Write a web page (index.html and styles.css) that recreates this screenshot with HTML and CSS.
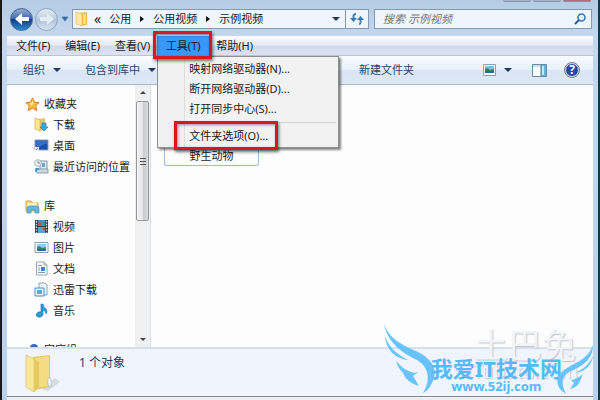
FILE: index.html
```html
<!DOCTYPE html>
<html lang="zh-CN">
<head>
    <meta charset="UTF-8">
    <meta name="viewport" content="width=device-width, initial-scale=1.0">
    <title>示例视频</title>
    <link rel="stylesheet" href="styles.css">
</head>
<body>
    <div class="window">
        <div class="caption"><i></i><i></i><i class="close"></i></div>
        <header class="nav">
            <button class="round back" aria-label="后退">
                <svg width="16" height="14" viewBox="0 0 16 14"><path d="M1 7L8 1V5H15V9H8V13Z" fill="#fff"/></svg>
            </button>
            <button class="round forward" aria-label="前进">
                <svg width="16" height="14" viewBox="0 0 16 14"><path d="M15 7L8 1V5H1V9H8V13Z" fill="#e6edf5"/></svg>
            </button>
            <button class="recent" aria-label="最近">
                <svg width="8" height="6" viewBox="0 0 8 6"><path d="M1 1H7L4 5Z" fill="#2c659c" stroke="#4d82b5"/></svg>
            </button>
            <div class="address">
                <svg width="14" height="16" viewBox="0 0 14 16"><path d="M3 2L12 1V14L5 15Z" fill="#e5bf51"/><path d="M1 1L7 3V15L1 13Z" fill="#fbe99c" stroke="#dcb958" stroke-width=".6"/><path d="M8 3H11V13H8Z" fill="#f7dc7d"/></svg>
                <span class="chev">«</span>
                <a href="#">公用</a><b class="right"></b>
                <a href="#">公用视频</a><b class="right"></b>
                <a href="#">示例视频</a>
                <button class="drop" aria-label="历史"><b class="down"></b></button>
                <button class="refresh" aria-label="刷新">
                    <svg width="14" height="14" viewBox="0 0 14 14"><path d="M6 2Q3 2 3.500 6M9 12Q11 12 10.500 8" fill="none" stroke="#3684c4" stroke-width="2"/><path d="M0 6H7L3.500 10ZM7 8H14L10.500 4Z" fill="#2b78bd"/></svg>
                </button>
            </div>
            <div class="search">
                <input type="text" placeholder="搜索 示例视频" aria-label="搜索">
                <svg width="12" height="12" viewBox="0 0 12 12"><circle cx="7.5" cy="4.5" r="3.5" fill="#e9f5ff" stroke="#3777b7" stroke-width="1.6"/><path d="M5 7L1 11" stroke="#2d5e99" stroke-width="2"/></svg>
            </div>
        </header>
        <nav class="menubar">
            <button>文件(F)</button>
            <button>编辑(E)</button>
            <button>查看(V)</button>
            <div class="tools">
                <button class="active">工具(T)</button>
                <div class="menu">
                    <button>映射网络驱动器(N)...</button>
                    <button>断开网络驱动器(D)...</button>
                    <button>打开同步中心(S)...</button>
                    <hr>
                    <button class="options">文件夹选项(O)...</button>
                </div>
            </div>
            <button>帮助(H)</button>
        </nav>
        <div class="toolbar">
            <button>组织<b class="down"></b></button>
            <button>包含到库中<b class="down"></b></button>
            <button class="new">新建文件夹</button>
            <button class="view" aria-label="更改视图">
                <svg width="13" height="12" viewBox="0 0 13 12"><path d="M.5.5H12.5V11.5H.5Z" fill="#fff" stroke="#8ba0b5"/><path d="M2 2H11V6H2Z" fill="#79bdea"/><path d="M2 5Q5 3 7 6L11 5V9H2Z" fill="#32805d"/><path d="M2 7H11V9H2Z" fill="#2c649d"/></svg>
                <b class="down"></b>
            </button>
            <button aria-label="预览窗格">
                <svg width="15" height="13" viewBox="0 0 15 13"><path d="M.5.5H14.5V12.5H.5Z" fill="#fff" stroke="#6689a5"/><path d="M1 2H9" stroke="#a9bccc"/><path d="M9 1H14V12H9Z" fill="#62b5d5"/><path d="M11 2V11" stroke="#bdebf5" stroke-width="2"/><path d="M9 1V12" stroke="#537e9d"/></svg>
            </button>
            <button class="help" aria-label="帮助">?</button>
        </div>
        <main class="content">
            <aside class="sidebar">
                <div class="tree">
                    <ul>
                        <li class="head"><svg width="15" height="15" viewBox="0 0 15 15"><path d="M7.5 1L9.5 5.2L14 5.6L10.7 8.8L11.7 13.5L7.5 11.1L3.3 13.5L4.3 8.8L1 5.6L5.5 5.2Z" fill="#fdbc3c" stroke="#db7819"/><path d="M7.5 3L8.7 6.5L6 8.5L4 6.5L6.5 6Z" fill="#ffe99b"/></svg>收藏夹</li>
                        <li><svg width="15" height="15" viewBox="0 0 15 15"><path d="M4 2L11 1V13L5 14Z" fill="#e8c566"/><path d="M1 1L6 3V14L1 12Z" fill="#fae793" stroke="#cfae51" stroke-width=".7"/><path d="M8 6H12V10H14L10 14L6 10H8Z" fill="#37a7e6" stroke="#1b74b5" stroke-width=".6"/></svg>下载</li>
                        <li><svg width="15" height="15" viewBox="0 0 15 15"><path d="M1 2H14V12H1Z" fill="#1d4ea8" stroke="#89a2bd"/><path d="M2 3H13V6Q7 6 5 11H2Z" fill="#376fc8"/><path d="M1 9H5V13H1Z" fill="#e7f4fd"/><path d="M2 12L4 10" stroke="#278bd4"/></svg>桌面</li>
                        <li><svg width="15" height="15" viewBox="0 0 15 15"><path d="M6 2H13V11H6Z" fill="#dce7ef" stroke="#8498a9"/><path d="M8 4H11V8H8Z" fill="#6ba8cc"/><path d="M2 10H14V14H3Z" fill="#cbd8e1" stroke="#8d9fae"/><circle cx="4" cy="4" r="3.3" fill="#f4f7f9" stroke="#a3b1bc"/><path d="M4 2V4H6" fill="none" stroke="#647e90"/><path d="M2 13V10H5" fill="none" stroke="#268bcb" stroke-width="1.4"/></svg>最近访问的位置</li>
                    </ul>
                    <ul>
                        <li class="head"><svg width="15" height="15" viewBox="0 0 15 15"><path d="M1 2H6L7 4H13V12H1Z" fill="#f4d97a" stroke="#cbaa4a"/><path d="M2 4H12V7H2Z" fill="#fff4b5"/><path d="M2 14V10Q2 7 5 7H11Q14 7 14 10V14H10V11H6V14Z" fill="#62b8dd" stroke="#3c8db7" stroke-width=".7"/></svg>库</li>
                        <li><svg width="15" height="15" viewBox="0 0 15 15"><path d="M1 1H14V14H1Z" fill="#31424e"/><path d="M4 1H11V7H4Z" fill="#3f91c8"/><path d="M4 8H11V14H4Z" fill="#51a7d5"/><path d="M4 4L7 3L8 7H4ZM8 9H11V12Z" fill="#ba5840"/><path d="M2.5 2V14M12.5 2V14" stroke="#d8e3e7" stroke-width="1.3" stroke-dasharray="1.4 1.4"/></svg>视频</li>
                        <li><svg width="15" height="15" viewBox="0 0 15 15"><path d="M1 2.5H14V12.5H1Z" fill="#fff" stroke="#8b9eab"/><path d="M3 4H12V11H3Z" fill="#8fcdec"/><path d="M3 7Q6 5 8 8L12 7V11H3Z" fill="#328577"/><path d="M3 9H12V11H3Z" fill="#236d9a"/></svg>图片</li>
                        <li><svg width="15" height="15" viewBox="0 0 15 15"><path d="M2.5 1H10L13 4V14H2.5Z" fill="#fafdff" stroke="#95a6b2"/><path d="M10 1V4H13" fill="none" stroke="#95a6b2"/><path d="M4 4.5H8M4 7H6M4 9H6M4 11.5H11" stroke="#7b9db6"/><path d="M7 6H11V10H7Z" fill="#3f83c6"/></svg>文档</li>
                        <li><svg width="15" height="15" viewBox="0 0 15 15"><path d="M5 1H11L13 3V13H5Z" fill="#eef7fd" stroke="#8ca4b6"/><path d="M1 6H10V14H1Z" fill="#e7f4ff" stroke="#4b8bc0"/><path d="M3 8H8V12H3Z" fill="#59a9e1"/></svg>迅雷下载</li>
                        <li><svg width="15" height="15" viewBox="0 0 15 15"><path d="M7 1H9Q9 4 12 6Q14 8 12 11Q12 8 9 7V12Q7 15 4 14Q1 13 3 10Q5 8 7 9Z" fill="#249bdd" stroke="#1d75b5" stroke-width=".6"/></svg>音乐</li>
                    </ul>
                    <ul>
                        <li class="head"><svg width="15" height="15" viewBox="0 0 15 15"><circle cx="9" cy="5" r="4" fill="#3469c5"/><circle cx="4" cy="11" r="3" fill="#45a2d5"/></svg>家庭组</li>
                    </ul>
                </div>
                <div class="scroll">
                    <b class="up"></b>
                    <div class="thumb"><i></i><i></i><i></i></div>
                    <b class="down"></b>
                </div>
            </aside>
            <section class="files">
                <div class="file">野生动物</div>
            </section>
        </main>
        <footer class="details">
            <svg width="38" height="40" viewBox="0 0 38 40"><path d="M18 36L31 25L36 29L24 38Z" fill="#d6dbe3"/><path d="M9 4L26 2V34L10 37Z" fill="#e7c55f"/><path d="M11 5L25 3V33L11 35Z" fill="#f4dc83"/><path d="M2 2L10 6V39L2 34Z" fill="#fae899" stroke="#d9bd67" stroke-width=".7"/><path d="M10 6L15 9V35L10 39Z" fill="#e8c960"/><path d="M24 25H27V33H24Z" fill="#f8fbff" stroke="#a9b7c5" stroke-width=".6"/></svg>
            <span>1 个对象</span>
        </footer>
        <div class="bottom"></div>
    </div>
    <div class="stamp"><strong>土巴兔</strong><span>Tubatu.com</span></div>
    <div class="brand">
        <svg width="54" height="72" viewBox="0 0 54 72"><path d="M1 1C7 17 20 22 35 29C51 37 55 49 49 60Q45 68 40 70C48 57 46 44 34 37C18 29 5 20 1 1ZM2 13C6 25 15 32 25 37C13 36 3 27 2 13ZM13 38Q20 47 31 50L35 49L30 53L36 63Q23 59 20 50Q15 45 13 38Z" fill="#69c3fb"/></svg>
        <div class="name"><strong>我爱IT技术网</strong><span>www.52ij.com</span></div>
        <svg width="37" height="50" viewBox="0 0 37 50"><path d="M37 0C32 14 21 17 11 23C-1 30-2 42 10 49C5 39 5 31 15 26C29 20 37 13 37 0ZM37 11C33 20 27 24 19 28C29 27 36 20 37 11ZM27 29Q22 34 15 35L18 38L14 44Q22 42 24 36Z" fill="#69c3fb"/></svg>
    </div>
</body>
</html>
```
FILE: styles.css
```css
* {
    box-sizing: border-box;
}

body {
    margin: 0;
    height: 100vh;
    display: flex;
    font: 11px/20px "Noto Sans", "Noto Sans CJK SC", sans-serif;
    color: #1b1b1b;
    background: #fff;
    overflow: hidden;
    position: relative;
}

button {
    border: 0;
    padding: 0;
    background: none;
    font: inherit;
    color: inherit;
    white-space: nowrap;
}

a {
    color: inherit;
    text-decoration: none;
}

svg {
    display: block;
    flex: none;
}

ul {
    list-style: none;
    margin: 0 0 19px;
    padding: 0;
}

.window {
    flex: 1;
    min-width: 0;
    display: flex;
    flex-direction: column;
    padding: 0 5px;
    border-left: 2px solid #17191d;
    border-right: 2px solid #0e3b49;
    background: linear-gradient(#b4cbe4, #c3d8ee 36px, #b9d1ea);
}

.caption {
    display: flex;
    justify-content: flex-end;
    gap: 2px;
    height: 2px;
    padding-right: 2px;
}

.caption i {
    width: 28px;
    background: #a3b2c5;
    border-bottom: 1px solid #8495a9;
    border-radius: 0 0 3px 3px;
}

.caption .close {
    background: #a87378;
}

/* address row */
.nav {
    display: flex;
    align-items: center;
    height: 34px;
    padding: 0 1px 0 3px;
}

.round {
    display: flex;
    align-items: center;
    justify-content: center;
    width: 23px;
    height: 23px;
    border-radius: 50%;
    border: 1px solid #8ea5bf;
    background: linear-gradient(#e1eaf3, #bccddf 50%, #aec3d9 50%, #d6e4f1);
}

.back {
    border-color: #45658e;
    background: linear-gradient(#91afd5, #3a66a7 48%, #123b82 50%, #2f8bd4);
}

.forward {
    margin-left: 2px;
}

.recent {
    margin: 0 3px;
}

.address,
.search {
    display: flex;
    align-items: center;
    height: 20px;
    border: 1px solid #8799ae;
    background: #eff5fc;
}

.address {
    flex: 312;
    padding-left: 2px;
    margin-right: 5px;
}

.chev {
    margin: 0 8px 0 5px;
    font-size: 14px;
}

.right {
    margin: 0 9px;
    border: 3px solid transparent;
    border-left: 4px solid #111;
    border-right: 0;
}

.down {
    display: block;
    border: 4px solid transparent;
    border-top-color: #1e395b;
    border-bottom: 0;
}

.drop {
    margin-left: auto;
    padding: 0 5px;
}

.refresh {
    align-self: stretch;
    padding: 0 4px;
    border-left: 1px solid #8799ae;
}

.search {
    flex: 216;
    padding: 0 5px 0 8px;
}

.search input {
    flex: 1;
    min-width: 0;
    padding: 0;
    border: 0;
    background: none;
    font: inherit;
    line-height: 18px;
    font-style: italic;
}

.search input::placeholder {
    color: #777;
}

/* menu bar */
.menubar {
    display: flex;
    height: 20px;
    padding-left: 9px;
    gap: 15px;
    background: linear-gradient(#fcfdff, #e7ebf6 45%, #d3daec 55%, #dde2f1);
    border-bottom: 1px solid #b7c4da;
}

.tools {
    position: relative;
    margin: 0 -8px;
}

.active {
    width: 52px;
    background: linear-gradient(#3b94f6, #3799ff);
}

.tools::after,
.options::after {
    content: "";
    position: absolute;
    border: 3px solid #d9181c;
    box-shadow: 1px 2px 3px #0008, inset 1px 1px 3px #0006;
}

.tools::after {
    inset: -5px -3px -4px -4px;
    z-index: 3;
}

.menu {
    position: absolute;
    z-index: 2;
    top: 20px;
    left: 0;
    width: 182px;
    display: flex;
    flex-direction: column;
    padding: 2px 2px 1px;
    border: 1px solid #8e8e8e;
    background: linear-gradient(90deg, #f0f0f0 26px, #dedede 26px, #dedede 27px, #f2f2f2 27px);
    box-shadow: 2px 2px 2px #0007;
}

.menu button {
    height: 20px;
    padding-left: 29px;
    text-align: left;
}

.menu hr {
    margin: 3px 0 3px 27px;
    border: 0;
    border-top: 1px solid #d4d4d4;
}

.menu .options {
    position: relative;
}

.options::after {
    inset: -5px 58px -4px 14px;
}

/* command bar */
.toolbar {
    display: flex;
    align-items: center;
    height: 29px;
    padding: 0 14px 0 16px;
    color: #27466b;
    background: linear-gradient(#fafcff, #e8f0fa 48%, #dbe6f4 50%, #dce8f6);
    border-bottom: 1px solid #a7b9d0;
}

.toolbar button {
    display: flex;
    align-items: center;
    gap: 8px;
    margin-right: 24px;
}

.toolbar .new {
    margin-left: 179px;
}

.toolbar .view {
    margin: 0 20px 0 auto;
}

.toolbar button:nth-last-child(2) {
    margin-right: 18px;
}

.toolbar .help {
    justify-content: center;
    width: 14px;
    height: 14px;
    margin: 0;
    border-radius: 50%;
    border: 1px solid #d1d7e0;
    outline: 1px solid #747d8f;
    background: #2449a5;
    color: #fff;
    font-size: 12px;
    font-weight: bold;
}

.content {
    flex: 1;
    min-height: 0;
    display: flex;
    background: #fdfdfd;
}

.sidebar {
    display: flex;
    width: 144px;
    border-right: 1px solid #d7e2ef;
}

.tree {
    flex: 1;
    overflow: hidden;
    padding: 9px 0 0 27px;
}

.tree li {
    display: flex;
    align-items: center;
    gap: 4px;
    height: 21px;
    white-space: nowrap;
}

.tree .head {
    height: 20px;
    margin-left: -9px;
}

.scroll {
    width: 15px;
    display: flex;
    flex-direction: column;
    align-items: center;
    padding: 6px 0;
    background: #f0f0f1;
}

.scroll .down,
.up {
    border: 3px solid transparent;
    border-top-color: #444;
    border-bottom: 0;
}

.scroll .up {
    border-top: 0;
    border-bottom: 3px solid #444;
}

.scroll .down {
    margin-top: auto;
}

.thumb {
    display: flex;
    flex-direction: column;
    justify-content: center;
    align-items: center;
    gap: 2px;
    width: 13px;
    height: 48%;
    margin-top: 7px;
    border: 1px solid #979797;
    border-radius: 2px;
    background: linear-gradient(90deg, #f5f5f5, #e5e5e7 50%, #c9cacd 55%, #d9dadd);
}

.thumb i {
    width: 6px;
    height: 1px;
    background: #555;
}

.files {
    flex: 1;
    padding: 5px 13px;
}

.file {
    display: flex;
    align-items: flex-end;
    justify-content: center;
    width: 95px;
    height: 76px;
    border: 1px solid #9cbad9;
    border-radius: 2px;
    line-height: 18px;
}

.details {
    display: flex;
    height: 49px;
    padding: 4px 17px;
    gap: 17px;
    color: #1e395b;
    font-size: 12px;
    background: #f0f4fc;
    border-top: 2px solid #d5e0ec;
}

.bottom {
    height: 4px;
    background: #eeeeee;
    border-top: 1px solid #868b92;
}

/* watermarks lie over the window */
.stamp {
    position: absolute;
    right: 22px;
    bottom: 20px;
    display: flex;
    flex-direction: column;
    text-align: center;
    color: #f2f4f7;
    text-shadow: 1px 1px 1px #bfc5ce;
}

.stamp strong {
    font-size: 34px;
    line-height: 34px;
    font-weight: normal;
}

.stamp span {
    font-size: 19px;
    line-height: 18px;
}

.brand {
    position: absolute;
    right: 7px;
    bottom: 5px;
    display: flex;
    align-items: flex-end;
    color: #59b9f8;
}

.brand .name {
    display: flex;
    flex-direction: column;
    align-items: center;
    margin: 0 -6px 2px;
    white-space: nowrap;
}

.brand strong {
    font-size: 22px;
    line-height: 22px;
}

.brand span {
    font-size: 13px;
    line-height: 14px;
    font-weight: bold;
}
```
